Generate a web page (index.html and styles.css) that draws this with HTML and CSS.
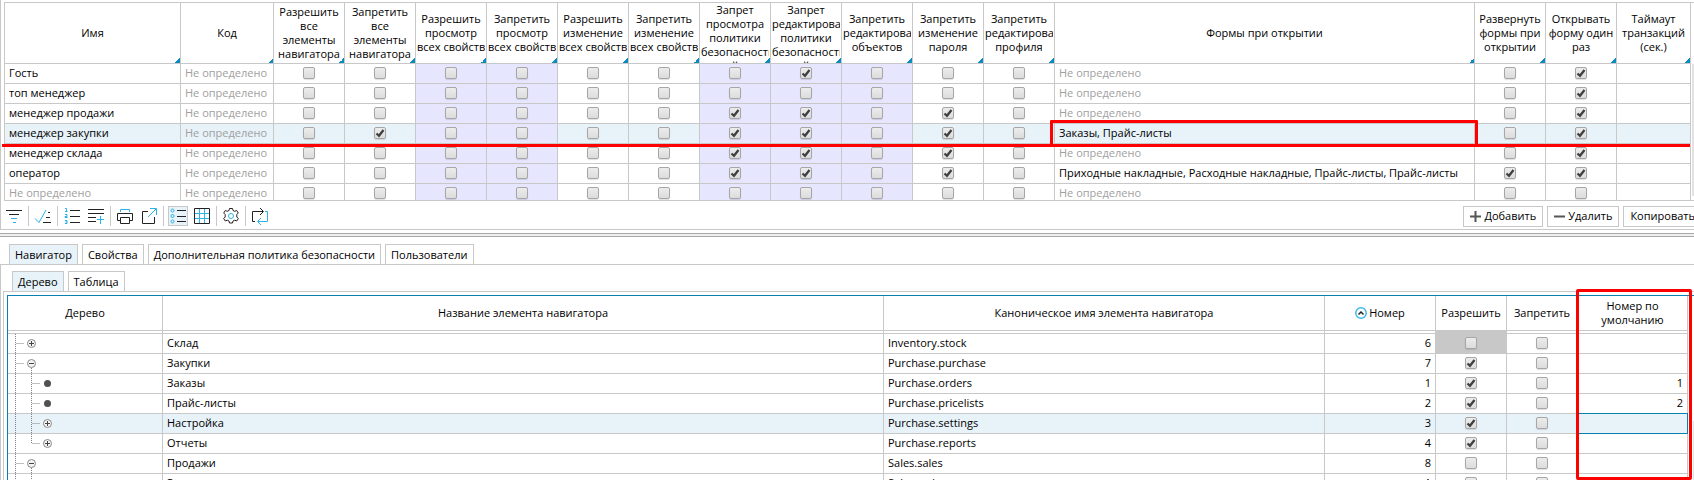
FILE: index.html
```
<!DOCTYPE html>
<html lang="ru">
<head>
<meta charset="utf-8">
<title>Политика безопасности</title>
<link rel="stylesheet" href="styles.css">
</head>
<body>
<div class="app">
  <section class="panel">
    <div class="grid-scroll">
      <table class="grid roles">
        <colgroup>
          <col class="w-name"><col class="w-code">
          <col class="w-flag"><col class="w-flag"><col class="w-flag"><col class="w-flag"><col class="w-flag"><col class="w-flag"><col class="w-flag"><col class="w-flag"><col class="w-flag"><col class="w-flag"><col class="w-flag">
          <col><col class="w-flag"><col class="w-flag"><col class="w-timeout">
        </colgroup>
        <thead><tr id="roles-head"></tr></thead>
        <tbody id="roles-body"></tbody>
      </table>
      <div class="scrollbar"></div>
    </div>
    <div class="mark-row"></div>
    <div class="toolbar">
      <button class="tool" aria-label="Фильтр"><svg width="18" height="18" viewBox="0 0 18 18"><path class="k" d="M1 3.500h16M4 7.500h10"/><path class="b" d="M6 11.500h6M8 15.500h3"/></svg></button>
      <span class="sep"></span>
      <button class="tool" aria-label="Отметить"><svg width="18" height="18" viewBox="0 0 18 18"><path class="b" d="M1 11.500L5 15.500L12 3"/><path class="k" d="M14 5.500h2M12 10.500h4M9 15.500h8"/></svg></button>
      <span class="sep"></span>
      <button class="tool" aria-label="Нумерация"><svg width="18" height="18" viewBox="0 0 18 18"><path class="k" d="M7 3.500h10M7 9.500h10M7 15.500h10"/><path class="b" d="M2 1.500h1.500v3M2 4.500h2.500M2 7.500h2v2h-2v1h2.500M2 13.500h2v3h-2M2.500 15h1.500"/></svg></button>
      <button class="tool" aria-label="Добавить строку"><svg width="18" height="18" viewBox="0 0 18 18"><path class="k" d="M1 2.500h16M1 6.500h16M1 10.500h8M1 14.500h8"/><path class="b" d="M13.500 9v8M10 12.500h7"/></svg></button>
      <span class="sep"></span>
      <button class="tool" aria-label="Печать"><svg width="18" height="18" viewBox="0 0 18 18"><path class="b" d="M4.500 5V2.500h9V5"/><path class="k" d="M4 13.500H1.500v-7h15v7H14M4.500 10.500h9v6h-9z"/></svg></button>
      <button class="tool" aria-label="Экспорт"><svg width="18" height="18" viewBox="0 0 18 18"><path class="k" d="M8 4.500H2.500v12h12V10"/><path class="b" d="M8 10L16 2M10 1.500h6.500V8"/></svg></button>
      <span class="sep"></span>
      <button class="tool on" aria-label="Список"><svg width="18" height="18" viewBox="0 0 18 18"><path class="k" d="M8 3.500h9M8 9.500h9M8 14.500h9"/><g class="b"><circle cx="3.500" cy="3.500" r="1.500"/><circle cx="3.500" cy="9" r="1.500"/><circle cx="3.500" cy="14.500" r="1.500"/></g></svg></button>
      <button class="tool" aria-label="Таблица"><svg width="18" height="18" viewBox="0 0 18 18"><path class="b" d="M6.500 2v14M11.500 2v14M2 6.500h14M2 11.500h14"/><path class="k" d="M1.500 1.500h15v15h-15z"/></svg></button>
      <span class="sep"></span>
      <button class="tool" aria-label="Настройки"><svg width="18" height="18" viewBox="0 0 18 18"><path class="k" d="M7.500 1.500h3l.5 2 1.700.8 2-.8 1.600 2.500-1.500 1.500v2.500l1.500 1.500-1.600 2.500-2-.8-1.700.8-.5 2h-3l-.5-2-1.700-.8-2 .8-1.600-2.500 1.500-1.500V7.500L1.700 6l1.600-2.500 2 .8L7 3.500z"/><circle class="b" cx="9" cy="9" r="2.500"/></svg></button>
      <span class="sep"></span>
      <button class="tool" aria-label="Обновить"><svg width="18" height="18" viewBox="0 0 18 18"><path class="k" d="M4 14.500H1.500v-10H12M9 1l3.500 3.500L9 8"/><path class="b" d="M14 4.500h2.500v10H7M10 11l-3.500 3.500L10 18"/></svg></button>
      <div class="actions">
        <button class="btn"><svg width="11" height="11" viewBox="0 0 11 11"><path d="M5.500 0v11M0 5.500h11"/></svg>Добавить</button>
        <button class="btn"><svg width="11" height="11" viewBox="0 0 11 11"><path d="M0 5.500h11"/></svg>Удалить</button>
        <button class="btn">Копировать</button>
      </div>
    </div>
  </section>
  <div class="splitter"></div>
  <nav class="tabs">
    <button class="tab on">Навигатор</button><button class="tab">Свойства</button><button class="tab">Дополнительная политика безопасности</button><button class="tab">Пользователи</button>
  </nav>
  <section class="pane outer">
    <nav class="tabs">
      <button class="tab on">Дерево</button><button class="tab">Таблица</button>
    </nav>
    <div class="pane inner">
      <div class="nav-wrap">
        <table class="grid nav">
          <colgroup><col class="w-tree"><col><col class="w-canon"><col class="w-num"><col class="w-flag"><col class="w-flag"><col class="w-default"></colgroup>
          <thead><tr>
            <th>Дерево</th><th>Название элемента навигатора</th><th>Каноническое имя элемента навигатора</th>
            <th><svg class="sort" width="12" height="12" viewBox="0 0 12 12"><circle cx="6" cy="6" r="5.200"/><path d="M3.500 7.500L6 5l2.500 2.500"/></svg>Номер</th>
            <th>Разрешить</th><th>Запретить</th><th>Номер по<br>умолчанию</th>
          </tr></thead>
          <tbody id="nav-body"></tbody>
        </table>
        <div class="scrollbar"></div>
        <div class="mark-column"></div>
      </div>
    </div>
  </section>
</div>
<script src="app.js"></script>
</body>
</html>
```
FILE: styles.css
```
* { box-sizing: border-box; }
body {
  margin: 0;
  height: 100vh;
  overflow: hidden;
  background: #fff;
  color: #000;
  font: 11px/14px "Open Sans", "Noto Sans", sans-serif;
}
button { font: inherit; color: inherit; cursor: pointer; }

/* The working area runs a little past the right edge of the window. */
.app {
  width: calc(100% + 8px);
  height: 100%;
  display: flex;
  flex-direction: column;
}

/* Grids */
.panel {
  position: relative;
  padding: 2px 0 0 3px;
  border: solid #c8c8c8;
  border-width: 0 0 1px 1px;
}
.grid-scroll {
  display: flex;
  height: 199px;
  overflow: hidden;
  border: solid #c8c8c8;
  border-width: 1px 0 1px 1px;
}
.grid {
  flex: 1;
  width: 0;
  height: max-content;
  table-layout: fixed;
  border-collapse: separate;
  border-spacing: 0;
}
.grid th, .grid td {
  border: solid #c8c8c8;
  border-width: 0 1px 1px 0;
  white-space: nowrap;
}
.grid th {
  position: relative;
  padding: 0 1px;
  font-weight: 400;
  text-align: center;
  vertical-align: middle;
}
.grid td {
  height: 20px;
  padding: 0 4px 1px;
  line-height: 18px;
}
.grid .num { text-align: right; }
.grid .check { padding: 0 0 1px; text-align: center; }
.grid .tint { background: #e6e6fe; }
.grid .empty { color: #a0a0a0; }
.grid .current { background: #e7f2f9; }

.roles th { height: 61px; }
.roles .label {
  display: block;
  max-height: 60px;
  overflow: hidden;
}
.roles th::after {
  content: "";
  position: absolute;
  right: 0;
  bottom: 0;
  width: 5px;
  height: 5px;
  background: linear-gradient(135deg, transparent 50%, #0a8cc0 50%);
}
.w-name { width: 176px; }
.w-code { width: 93px; }
.w-flag { width: 71px; }
.w-timeout { width: 74px; }
.w-tree { width: 155px; }
.w-canon { width: 441px; }
.w-num { width: 111px; }
.w-default { width: 110px; }

.scrollbar { width: 11px; padding: 61px 0 4px 1px; }
.scrollbar::before {
  content: "";
  display: block;
  height: 100%;
  background: #e2e2e2;
}

input[type="checkbox"] {
  appearance: none;
  display: block;
  width: 12px;
  height: 12px;
  margin: 0 auto;
  border: 1px solid #a6a6a6;
  border-radius: 2px;
  background: linear-gradient(#ececec, #dcdcdc);
  box-shadow: 0 1px 1px #00000020;
}
input[type="checkbox"]:checked {
  background:
    url("data:image/svg+xml,%3Csvg xmlns='http://www.w3.org/2000/svg' viewBox='0 0 10 10'%3E%3Cpath d='M1.500 5.500L4 7.800L8.500 2' fill='none' stroke='%23404040' stroke-width='2.300'/%3E%3C/svg%3E") center / 10px 10px no-repeat,
    linear-gradient(#ececec, #dcdcdc);
}

/* Highlight marks */
.mark-row {
  position: absolute;
  top: 144px;
  left: 1px;
  right: 12px;
  height: 3px;
  background: #f00;
}
.marked-cell { position: relative; }
.marked-cell::after {
  content: "";
  position: absolute;
  inset: -4px -4px -4px -5px;
  border: 3px solid #f00;
  border-radius: 1px;
}
.mark-column {
  position: absolute;
  top: -7px;
  bottom: 0;
  right: 10px;
  width: 116px;
  border: 3px solid #f00;
  border-radius: 2px;
}

/* Toolbar */
.toolbar {
  display: flex;
  align-items: center;
  height: 28px;
  padding-top: 2px;
}
.tool {
  flex: none;
  width: 20px;
  height: 20px;
  margin-right: 4px;
  padding: 0;
  border: 1px solid transparent;
  background: none;
}
.tool.on { border-color: #c8c8c8; background: #e7f2f9; }
.tool svg { display: block; }
.tool path, .tool circle { fill: none; stroke-width: 1; }
.tool .k { stroke: #222; }
.tool .b, .tool .b circle { stroke: #2bb3e6; }
.sep { width: 1px; height: 20px; margin-right: 4px; background: #c8c8c8; }
.actions { display: flex; gap: 4px; margin-left: auto; }
.btn {
  display: flex;
  align-items: center;
  gap: 3px;
  height: 21px;
  padding: 0 6px;
  border: 1px solid #c8c8c8;
  background: #fff;
}
.btn path { fill: none; stroke: #555; stroke-width: 2; }

.splitter {
  flex: none;
  height: 4px;
  margin: 3px 0 7px;
  border: solid #a8a8a8;
  border-width: 1px 0;
  background: #f0f0f0;
}

/* Tabs */
.tabs {
  display: flex;
  flex: none;
  gap: 4px;
  padding-left: 9px;
}
.tab {
  height: 20px;
  padding: 0 5px;
  border: 1px solid #c8c8c8;
  border-bottom: 0;
  background: #fff;
}
.tab.on { background: #e7f2f9; }
.pane {
  flex: 1;
  min-height: 0;
  display: flex;
  flex-direction: column;
  border: solid #c8c8c8;
  border-width: 1px 0 0 1px;
}
.outer { padding: 6px 0 0 2px; }
.inner { padding: 3px 0 0 3px; }
.nav-wrap {
  position: relative;
  display: flex;
  flex: 1;
  min-height: 0;
  border: solid #0a80b0;
  border-width: 1px 0 0 1px;
}
.nav th { height: 35px; }
.nav .sliver td { height: 3px; padding: 0; line-height: 0; }
.nav .locked, .nav .locked-sliver { background: #c8c8c8; }
.nav .focus { border-color: #0a80b0; box-shadow: 0 -1px #0a80b0; }
.nav-wrap .scrollbar { width: 14px; padding: 125px 0 0 5px; }
.nav .tree { padding: 0; }
.tree svg { display: block; }
.line { fill: none; stroke: #808080; stroke-dasharray: 1 1; }
.knob { fill: #f4f4f4; stroke: #8a8a8a; }
.sign { fill: none; stroke: #444; }
.leaf { fill: #505050; }
.sort { margin-right: 2px; vertical-align: -2px; }
.sort circle { fill: #fff; stroke: #3db9ea; stroke-width: 1.500; }
.sort path { fill: none; stroke: #222; stroke-width: 1.500; }
```
FILE: app.js
```
const roleColumns = [
  'Имя', 'Код',
  'Разрешить<br>все<br>элементы<br>навигатора', 'Запретить<br>все<br>элементы<br>навигатора',
  'Разрешить<br>просмотр<br>всех свойств', 'Запретить<br>просмотр<br>всех свойств',
  'Разрешить<br>изменение<br>всех свойств', 'Запретить<br>изменение<br>всех свойств',
  'Запрет<br>просмотра<br>политики<br>безопасности<br>й', 'Запрет<br>редактирования<br>политики<br>безопасности<br>й',
  'Запретить<br>редактирования<br>объектов', 'Запретить<br>изменение<br>пароля', 'Запретить<br>редактирования<br>профиля',
  'Формы при открытии', 'Развернуть<br>формы при<br>открытии', 'Открывать<br>форму один<br>раз', 'Таймаут<br>транзакций<br>(сек.)'
];
const none = 'Не определено';
// name, indexes of ticked flags, forms, expand forms, open once
const roles = [
  ['Гость', [7], '', 0, 1],
  ['топ менеджер', [], '', 0, 1],
  ['менеджер продажи', [6, 7, 9], '', 0, 1],
  ['менеджер закупки', [1, 6, 7, 9], 'Заказы, Прайс-листы', 0, 1],
  ['менеджер склада', [6, 7, 9], '', 0, 1],
  ['оператор', [6, 7, 9], 'Приходные накладные, Расходные накладные, Прайс-листы, Прайс-листы', 1, 1],
  ['', [], '', 0, 0]
];
const tinted = [2, 3, 6, 7, 8];
const currentRole = 3;

const text = (value, cls = '') => `<td class="${value ? '' : 'empty'} ${cls}">${value || none}</td>`;
const check = (on, label, cls = '') =>
  `<td class="check ${cls}"><input type="checkbox" aria-label="${label}"${on ? ' checked' : ''}></td>`;
const plain = html => html.replace(/<br>/g, ' ');

document.getElementById('roles-head').innerHTML =
  roleColumns.map(c => `<th><span class="label">${c}</span></th>`).join('');

document.getElementById('roles-body').innerHTML = roles.map(([name, flags, forms, expand, once], i) => {
  const current = i === currentRole;
  let cells = text(name) + text('');
  for (let f = 0; f < 11; f++) {
    cells += check(flags.includes(f), plain(roleColumns[f + 2]), tinted.includes(f) ? 'tint' : '');
  }
  cells += text(forms, current ? 'marked-cell' : '');
  cells += check(expand, plain(roleColumns[14])) + check(once, plain(roleColumns[15])) + '<td></td>';
  return `<tr class="${current ? 'current' : ''}">${cells}</tr>`;
}).join('');

// level, node kind, title, canonical name, number, allowed, default number
const items = [
  [0, 'plus', 'Склад', 'Inventory.stock', 6, 0, ''],
  [0, 'minus', 'Закупки', 'Purchase.purchase', 7, 1, ''],
  [1, 'leaf', 'Заказы', 'Purchase.orders', 1, 1, 1],
  [1, 'leaf', 'Прайс-листы', 'Purchase.pricelists', 2, 1, 2],
  [1, 'plus', 'Настройка', 'Purchase.settings', 3, 1, ''],
  [1, 'plus', 'Отчеты', 'Purchase.reports', 4, 1, ''],
  [0, 'minus', 'Продажи', 'Sales.sales', 8, 0, ''],
  [1, 'leaf', 'Заказы', 'Sales.orders', 1, 0, '']
];

function treeIcon(level, kind, last) {
  const x = 23 + level * 16;
  const trunk = x - 15.5;
  let s = '<path class="line" d="M7.5 0v19"/>';
  if (level) s += `<path class="line" d="M${trunk} 0v${last ? 10 : 19}"/>`;
  s += `<path class="line" d="M${trunk + 1} 9.500h8"/>`;
  if (kind === 'minus') s += `<path class="line" d="M${x + 0.5} 14v5"/>`;
  if (kind === 'leaf') {
    s += `<circle class="leaf" cx="${x + 0.5}" cy="9.500" r="3.500"/>`;
  } else {
    s += `<circle class="knob" cx="${x + 0.5}" cy="9.500" r="4"/>`;
    s += `<path class="sign" d="M${x - 2} 9.500h5${kind === 'plus' ? `M${x + 0.5} 7v5` : ''}"/>`;
  }
  return `<svg width="64" height="19" viewBox="0 0 64 19">${s}</svg>`;
}

document.getElementById('nav-body').innerHTML =
  '<tr class="sliver"><td></td><td></td><td></td><td></td><td class="locked-sliver"></td><td></td><td></td></tr>' +
  items.map(([level, kind, title, canon, num, allowed, def], i) => {
    const current = i === 4;
    return `<tr class="${current ? 'current' : ''}">
      <td class="tree">${treeIcon(level, kind, i === 5)}</td>
      <td>${title}</td><td>${canon}</td><td class="num">${num}</td>
      ${check(allowed, 'Разрешить', i === 0 ? 'locked' : '')}${check(0, 'Запретить')}
      <td class="num${current ? ' focus' : ''}">${def}</td></tr>`;
  }).join('');
```
